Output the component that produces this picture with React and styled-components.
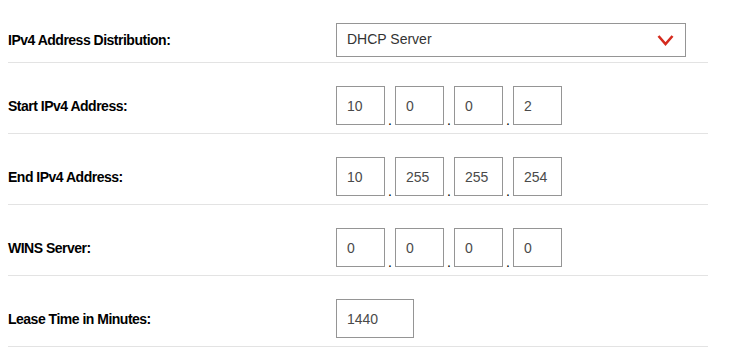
import React from "react";
import styled, { createGlobalStyle } from "styled-components";

const GlobalStyle = createGlobalStyle`
  html, body {
    margin: 0;
    padding: 0;
    background: #fff;
  }
  body {
    font-family: "Liberation Sans", Arial, sans-serif;
    color: #000;
  }
`;

const ROWS = [
  { label: "Start IPv4 Address:", octets: ["10", "0", "0", "2"] },
  { label: "End IPv4 Address:", octets: ["10", "255", "255", "254"] },
  { label: "WINS Server:", octets: ["0", "0", "0", "0"] },
];

const Chevron = () => (
  <svg width="17" height="12" viewBox="0 0 17 12">
    <polyline
      points="1.5,2 8.5,10 15.5,2"
      fill="none"
      stroke="#d52b1e"
      strokeWidth="2.6"
    />
  </svg>
);

const App = () => (
  <>
    <GlobalStyle />
    <Form>
      <Row first>
        <Label>IPv4 Address Distribution:</Label>
        <Select>
          <span>DHCP Server</span>
          <Chevron />
        </Select>
      </Row>
      {ROWS.map((row) => (
        <Row key={row.label}>
          <Label>{row.label}</Label>
          <Octets>
            {row.octets.map((value, i) => (
              <React.Fragment key={i}>
                {i > 0 && <Dot>.</Dot>}
                <Field>{value}</Field>
              </React.Fragment>
            ))}
          </Octets>
        </Row>
      ))}
      <Row>
        <Label>Lease Time in Minutes:</Label>
        <Field wide>1440</Field>
      </Row>
    </Form>
  </>
);

const Form = styled.div`
  width: 700px;
  margin-left: 8px;
`;

const Row = styled.div`
  display: grid;
  grid-template-columns: 328px 1fr;
  align-items: center;
  padding: 23px 0 ${(p) => (p.first ? "5px" : "8px")};
  border-bottom: 1px solid #e3e3e3;
`;

const Label = styled.div`
  font-size: 14px;
  font-weight: 700;
  letter-spacing: -0.5px;
  color: #000;
`;

const Select = styled.div`
  box-sizing: border-box;
  width: 350px;
  height: 34px;
  border: 1px solid #959595;
  display: flex;
  align-items: center;
  justify-content: space-between;
  padding: 0 11px 0 10px;
  font-size: 14px;
  color: #333;

  span {
    margin-top: -2px;
  }
`;

const Octets = styled.div`
  display: flex;
  align-items: flex-end;
`;

const Field = styled.div`
  box-sizing: border-box;
  width: ${(p) => (p.wide ? "78px" : "49px")};
  height: 39px;
  border: 1px solid #959595;
  display: flex;
  align-items: center;
  padding-left: 10px;
  font-size: 14px;
  color: #4a4a4a;
`;

const Dot = styled.span`
  width: 10px;
  text-align: center;
  font-size: 14px;
  line-height: 14px;
  color: #000;
  margin-bottom: -2px;
`;

export default App;
